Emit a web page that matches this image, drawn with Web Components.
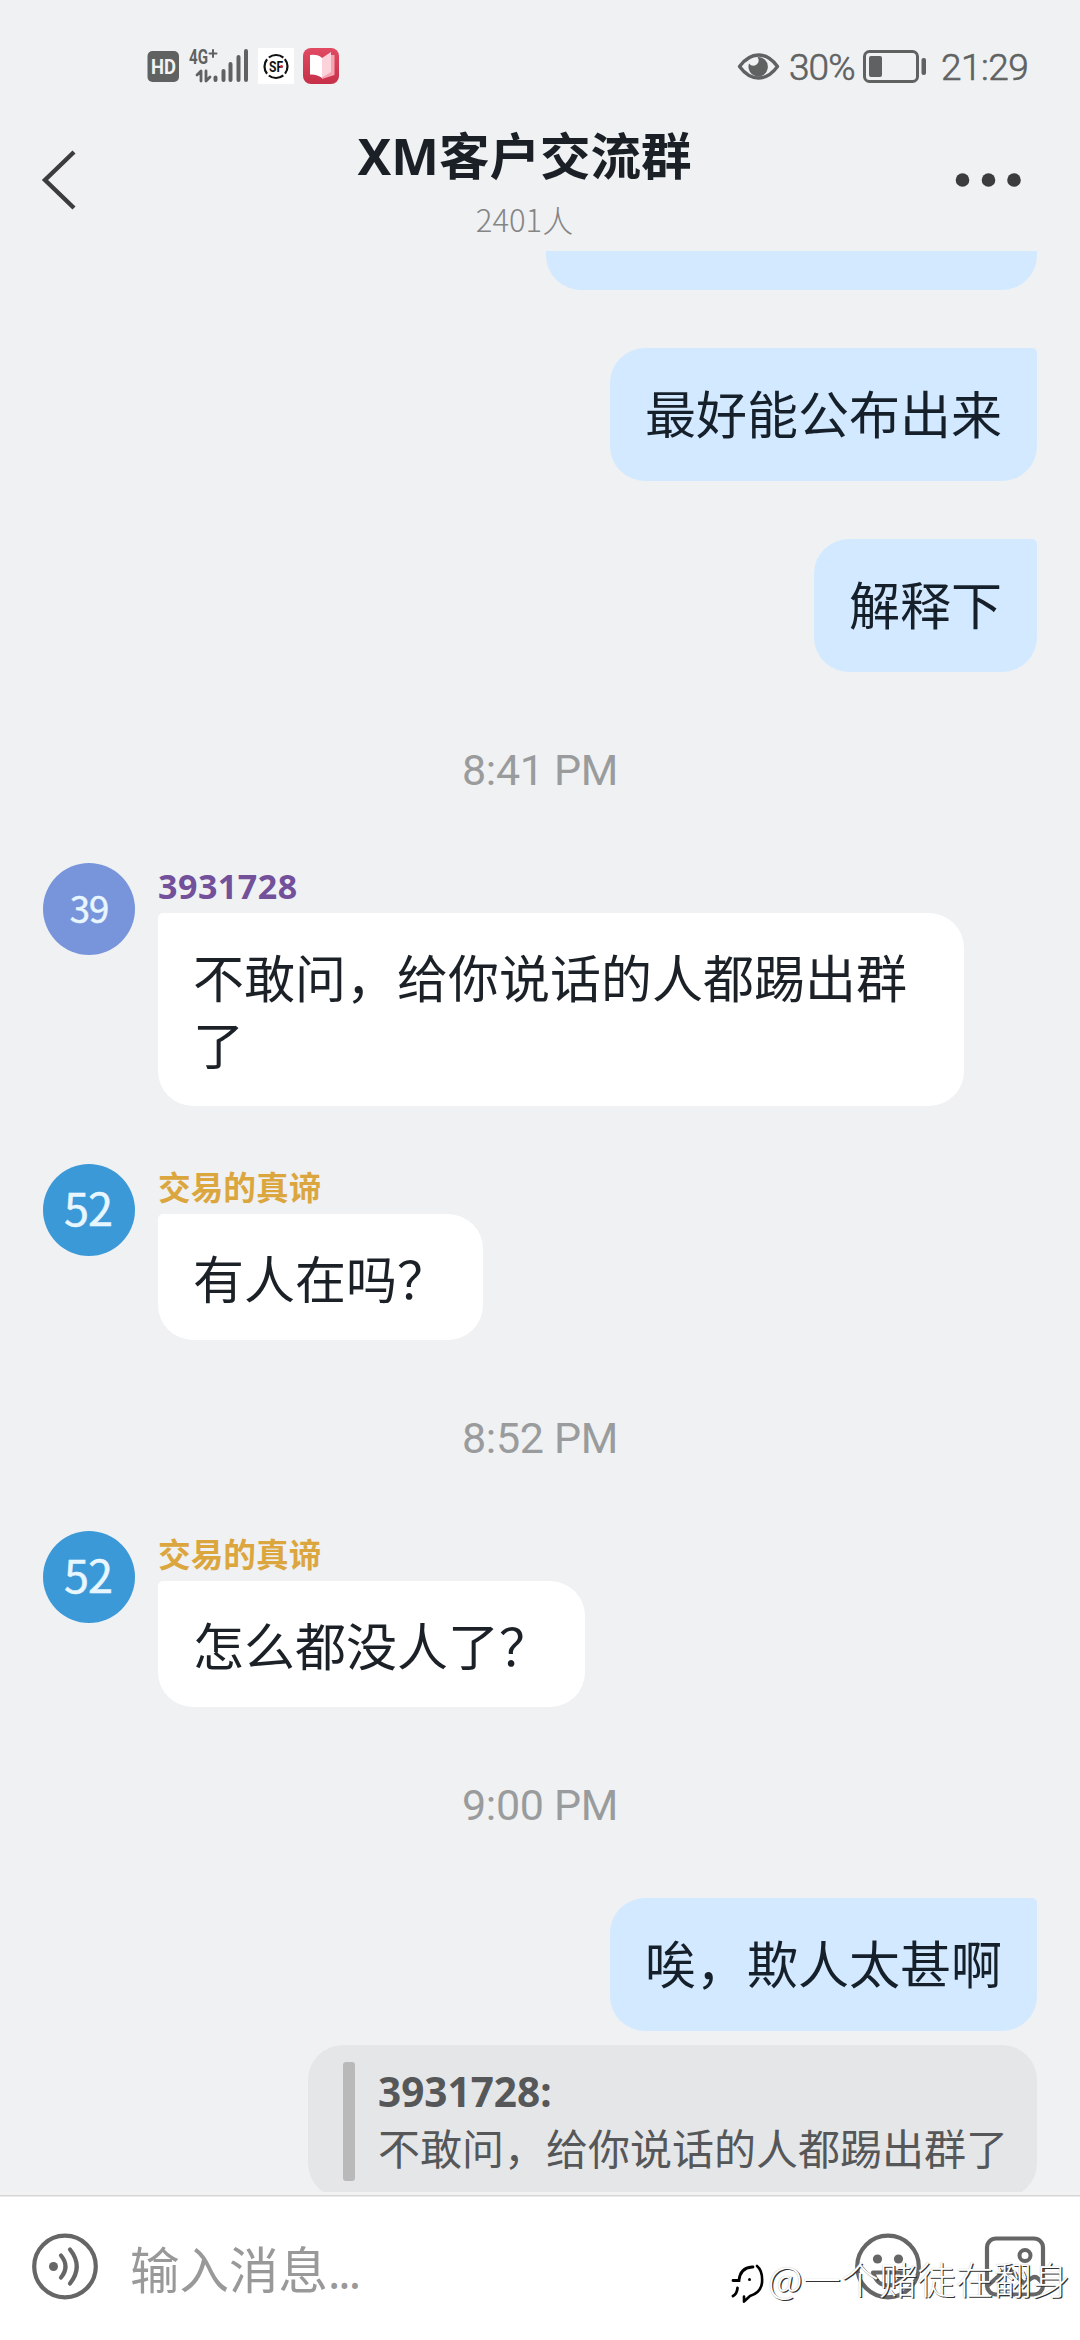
<!DOCTYPE html>
<html lang="zh-CN">
<head>
<meta charset="utf-8">
<title>XM客户交流群</title>
<style>
html,body{margin:0;padding:0}
body{width:1080px;height:2340px;overflow:hidden;background:#eff1f3;font-family:Roboto,"Noto Sans CJK SC",sans-serif;color:#1a2026}
</style>
</head>
<body>
<chat-app></chat-app>
<script>
const define=(name,css,html)=>customElements.define(name,class extends HTMLElement{
  constructor(){
    super();
    this.attachShadow({mode:'open'}).innerHTML=`<style>*{box-sizing:border-box}svg{display:block;flex:none;overflow:visible}${css}</style>${html}`;
  }
});

define('status-bar',`
:host{display:flex;justify-content:space-between;height:100px;padding:42px 50px 0 147px;color:#606262;font-size:37px;line-height:52px}
.side{display:flex;align-items:flex-start;height:52px}
svg{margin-top:6px}
.pct{margin-left:10px;width:73px;letter-spacing:-.9px;font-weight:300;-webkit-text-stroke:.6px #606262;white-space:nowrap}
.clock{margin-left:14px;width:89px;letter-spacing:-.5px;font-weight:300;-webkit-text-stroke:.6px #606262;white-space:nowrap}
text{font-family:Roboto,sans-serif}
`,`
<div class="side">
<svg width="200" height="46" viewBox="147 48 200 46">
<rect x="147.500" y="51" width="31.500" height="31" rx="5" fill="#606262"/>
<text x="151" y="74" font-size="20.500" font-weight="700" fill="#f2f3f4" textLength="25" lengthAdjust="spacingAndGlyphs">HD</text>
<text x="189" y="64" font-size="20" font-weight="700" fill="#606262" textLength="19" lengthAdjust="spacingAndGlyphs">4G</text>
<g stroke="#606262" fill="none" stroke-linecap="round">
<path d="M213 50v7M209.500 53.500h7" stroke-width="2"/>
<path d="M197 75l4-4v10M206 71v10l4-4" stroke-width="2.800" stroke-linejoin="round"/>
<path d="M215.500 77.500v2.500M223.500 71v9M230.500 64v16M238.500 57v23M246 51v29" stroke-width="4"/>
</g>
<rect x="258" y="48" width="36" height="36" fill="#fff"/>
<circle cx="276" cy="66.500" r="11.500" fill="none" stroke="#111" stroke-width="2.200" stroke-dasharray="15.500 2.560" transform="rotate(-40 276 66.500)"/>
<text x="269" y="72" font-size="15" font-weight="700" fill="#111" textLength="14" lengthAdjust="spacingAndGlyphs">SF</text>
<circle cx="281.500" cy="66.500" r="1.400" fill="#d02638"/>
<defs><linearGradient id="r" x2="0" y2="1"><stop stop-color="#e04a62"/><stop offset="1" stop-color="#c63049"/></linearGradient></defs>
<rect x="303" y="48" width="36" height="36" rx="8" fill="url(#r)"/>
<path d="M322 58l9-3h3.500v20l-12.500 4z" fill="#f5a5b2"/>
<path d="M322 58l9-6v20l-9 5.500z" fill="#fbd3da"/>
<path d="M310 55q8-1 12 3v20q-5-4-12-3.500z" fill="#fff"/>
</svg>
</div>
<div class="side">
<svg width="41" height="36" viewBox="738 48 41 36">
<path d="M739.500 66.500q8.500-11.500 19-11.500t19 11.500q-8.500 11.500-19 11.500t-19-11.500z" fill="none" stroke="#606262" stroke-width="3.400" stroke-linejoin="round"/>
<path d="M757.500 57a9.700 9.700 0 1 1-8.500 6.500q3 3.500 7 1.500 4.500-3 1.500-8z" fill="#606262"/>
</svg>
<span class="pct">30%</span>
<svg width="65" height="36" viewBox="862 48 65 36">
<rect x="864.500" y="51.500" width="53" height="30" rx="5" fill="none" stroke="#606262" stroke-width="3"/>
<rect x="869" y="56" width="13" height="21" rx="2" fill="#606262"/>
<rect x="921.500" y="58" width="4.500" height="17" rx="2" fill="#606262"/>
</svg>
<span class="clock">21:29</span>
</div>`);

define('chat-header',`
:host{display:flex;height:151px;padding:0 42px;justify-content:space-between}
svg{margin-top:48px}
.mid{display:flex;flex-direction:column;align-items:center;padding-top:26px;margin-right:9px;width:400px}
.title{font:700 50.5px/60px "Noto Sans","Noto Sans CJK SC",sans-serif;white-space:nowrap;color:#1a2026}
.sub{font:300 31px/36px "Noto Sans CJK SC",sans-serif;color:#858585;margin-top:15px}
`,`
<svg width="60" height="64" viewBox="42 148 60 64"><path d="M74 152L45 180l29 28" fill="none" stroke="#3c3c3e" stroke-width="4.400"/></svg>
<div class="mid"><div class="title"><slot></slot></div><div class="sub"><slot name="count"></slot></div></div>
<svg width="82" height="64" viewBox="956 148 82 64" fill="#3c3c3e"><circle cx="962.500" cy="180" r="6.800"/><circle cx="988.500" cy="180" r="6.800"/><circle cx="1014" cy="180" r="6.800"/></svg>`);

define('sent-bubble',`
:host{display:block;align-self:flex-end;margin-right:43px;height:133px;padding:31px 35px;border-radius:35px 5px 35px 35px;background:#d2e9ff;color:#16202a;font:400 51px/67px "Noto Sans CJK SC",sans-serif;white-space:nowrap}
:host([clipped]){width:491px;height:39px;padding:0;border-radius:0 0 35px 35px}
`,`<slot></slot>`);

define('time-mark',`
:host{display:flex;justify-content:center;align-items:center;height:191px;padding-top:4px;font:400 43px/50px Roboto,sans-serif;color:#9a9b9c;letter-spacing:-.3px}
`,`<slot></slot>`);

define('user-avatar',`
:host{display:flex;align-items:center;justify-content:center;width:92px;height:92px;padding:0 2px 6px 0;border-radius:50%;background:var(--avatar,#3b99d8);color:#e8f6ff;font:var(--avatar-font,400 45px/50px "Noto Sans CJK SC",sans-serif);-webkit-text-stroke:.5px #e8f6ff;letter-spacing:-1px}
`,`<slot></slot>`);

define('received-message',`
:host{display:flex;gap:23px;padding-left:43px;--name:#dca63f}
:host([kind=id]){--name:#73509a;--avatar:#7895dc;--avatar-font:400 36.5px/42px "Noto Sans CJK SC",sans-serif}
.col{display:flex;flex-direction:column;align-items:flex-start}
.name{height:50px;font:700 32.7px/44px "Noto Sans CJK SC",sans-serif;color:var(--name);white-space:nowrap}
:host([kind=id]) .name{font:700 34px/47px "Noto Sans",sans-serif;letter-spacing:.5px}
:host([kind=id]) user-avatar{padding:0 0 3px}
.bubble{background:#fff;border-radius:5px 35px 35px 35px;padding:30px 35px 29px;max-width:806px;font:400 51px/67px "Noto Sans CJK SC",sans-serif;color:#1b2127;word-break:break-all}
`,`
<user-avatar><slot name="initials"></slot></user-avatar>
<div class="col"><div class="name"><slot name="name"></slot></div><div class="bubble"><slot></slot></div></div>`);

define('quoted-message',`
:host{display:flex;align-self:flex-end;flex:none;margin:14px 43px 0 0;width:729px;height:153px;padding:17px 0 0 35px;gap:23px;background:#e5e6e8;border-radius:35px;color:#565758}
.rule{width:12px;height:119px;border-radius:3px;background:#b9b9b9}
.who{font:700 40.5px/50px "Noto Sans",sans-serif;margin-top:5px}
.text{font:400 42px/56px "Noto Sans CJK SC",sans-serif;white-space:nowrap;margin-top:2px}
`,`<div class="rule"></div><div><div class="who"><slot name="who"></slot></div><div class="text"><slot></slot></div></div>`);

define('chat-log',`
:host{display:flex;flex-direction:column;height:1941px;overflow:hidden}
`,`<slot></slot>`);

define('source-mark',`
:host{position:absolute;left:730px;top:2255px;display:flex;align-items:center;height:50px;font:300 38px/50px "Noto Sans CJK SC",sans-serif;color:#fff;text-shadow:1.200px 1.200px 0 #333,0 0 1px #aaa;white-space:nowrap}
span{width:306px;margin:-5px 0 0 4px;letter-spacing:.2px}
`,`
<svg width="34" height="50" viewBox="730 2255 34 50" fill="none" stroke-linecap="round">
<path d="M733 2280.500h6q1-12.500 13-13.500h1M733 2296q4-2 4.500-8" stroke="#000" stroke-width="2.800"/>
<path d="M757 2266q6 5 5 17-1.500 10-12 13l-6 5.500v-5" stroke="#000" stroke-width="2.600" stroke-linejoin="round"/>
<circle cx="749.500" cy="2279.500" r="1.500" fill="#000"/>
</svg><span><slot></slot></span>`);

define('message-composer',`
:host{display:flex;height:148px;padding:0 32px;background:#fff;border-top:3px solid #f2f2f3;box-shadow:inset 0 1.500px #d5d6d7}
svg{margin-top:38px}
.hint{flex:1;margin:41px 0 0 32px;font:400 49.5px/64px "Noto Sans CJK SC",sans-serif;color:#999}
.hint span{font:400 46px/50px "Noto Sans",sans-serif;letter-spacing:-2px}
.icons{display:flex;gap:61px}
`,`
<svg width="66" height="66" viewBox="32 2233.500 66 66" fill="none" stroke="#666" stroke-width="4.200" stroke-linecap="round">
<circle cx="65" cy="2267" r="30.800"/><circle cx="53.500" cy="2267" r="4.500" fill="#666" stroke="none"/>
<path d="M61 2256q9 11 0 22M70 2250q13.500 17 0 34"/></svg>
<div class="hint">输入消息<span>...</span></div>
<div class="icons">
<svg width="66" height="66" viewBox="855 2233.500 66 66" fill="none" stroke="#666" stroke-width="4.200">
<circle cx="888" cy="2267" r="30.800"/><circle cx="877.500" cy="2259.500" r="4.600" fill="#666" stroke="none"/><circle cx="898.500" cy="2259.500" r="4.600" fill="#666" stroke="none"/>
<path d="M873 2273q4 13 15 13t15-13z" stroke-linejoin="round"/></svg>
<svg width="66" height="66" viewBox="982 2233.500 66 66" fill="none" stroke="#666" stroke-width="4.200">
<rect x="987" y="2239" width="56" height="56" rx="9"/><circle cx="1025" cy="2256" r="5.500" stroke-width="4"/>
<path d="M988 2286l16-14q4-3 8 0l12 12 7-5q4-3 7 0l6 6"/></svg>
</div>`);

define('chat-app',`:host{display:block;width:1080px;height:2340px;background:#eff1f3;position:relative;overflow:hidden}
.gap{height:58px;flex:none}
sent-bubble,time-mark,received-message{flex:none}`,`
<status-bar></status-bar>
<chat-header>XM客户交流群<span slot="count">2401人</span></chat-header>
<chat-log>
<sent-bubble clipped></sent-bubble><div class="gap"></div>
<sent-bubble>最好能公布出来</sent-bubble><div class="gap"></div>
<sent-bubble>解释下</sent-bubble>
<time-mark>8:41 PM</time-mark>
<received-message kind="id"><span slot="initials">39</span><span slot="name">3931728</span>不敢问，给你说话的人都踢出群了</received-message>
<div class="gap"></div>
<received-message><span slot="initials">52</span><span slot="name">交易的真谛</span>有人在吗？</received-message>
<time-mark>8:52 PM</time-mark>
<received-message><span slot="initials">52</span><span slot="name">交易的真谛</span>怎么都没人了？</received-message>
<time-mark>9:00 PM</time-mark>
<sent-bubble>唉，欺人太甚啊</sent-bubble>
<quoted-message><span slot="who">3931728:</span>不敢问，给你说话的人都踢出群了</quoted-message>
</chat-log>
<message-composer></message-composer>
<source-mark>@一个赌徒在翻身</source-mark>`);
</script>
</body>
</html>
